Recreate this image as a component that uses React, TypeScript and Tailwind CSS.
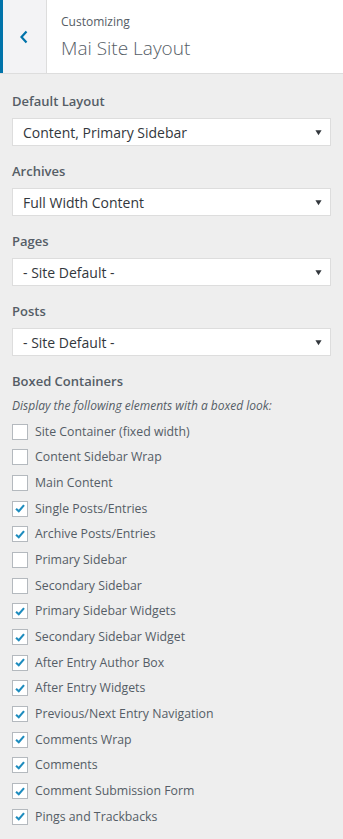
const selects = [
  { label: "Default Layout", value: "Content, Primary Sidebar" },
  { label: "Archives", value: "Full Width Content" },
  { label: "Pages", value: "- Site Default -" },
  { label: "Posts", value: "- Site Default -" },
];

const boxes: [string, boolean][] = [
  ["Site Container (fixed width)", false],
  ["Content Sidebar Wrap", false],
  ["Main Content", false],
  ["Single Posts/Entries", true],
  ["Archive Posts/Entries", true],
  ["Primary Sidebar", false],
  ["Secondary Sidebar", false],
  ["Primary Sidebar Widgets", true],
  ["Secondary Sidebar Widget", true],
  ["After Entry Author Box", true],
  ["After Entry Widgets", true],
  ["Previous/Next Entry Navigation", true],
  ["Comments Wrap", true],
  ["Comments", true],
  ["Comment Submission Form", true],
  ["Pings and Trackbacks", true],
];

const Check = ({ on }: { on: boolean }) => (
  <span className="flex h-4 w-4 shrink-0 items-center justify-center border border-[#b4b9be] bg-white">
    {on && (
      <svg viewBox="0 0 16 16" className="h-[15px] w-[15px]">
        <path d="M3.5 8.2 L6.6 11.2 L12.6 4.2" fill="none" stroke="#1e8cbe" strokeWidth="2.4" />
      </svg>
    )}
  </span>
);

export default function App() {
  return (
    <div className="min-h-[839px] w-[343px] bg-[#eeeeee] text-[#555d66]" style={{ fontFamily: '"Open Sans", "Liberation Sans", sans-serif' }}>
      {/* header */}
      <div className="flex h-[74px] border-b border-[#dddddd] bg-white">
        <div className="flex w-[47px] items-center justify-center border-l-[3px] border-r border-l-[#0073aa] border-r-[#dddddd] bg-[#f3f3f5] pr-[2px]">
          <svg viewBox="0 0 12 16" className="h-4 w-3">
            <path d="M8.5 2.5 L3.5 8 L8.5 13.5" fill="none" stroke="#0073aa" strokeWidth="2.2" />
          </svg>
        </div>
        <div className="flex flex-col pl-[14px] pt-[13px]">
          <span className="text-[12px] leading-[18px]">Customizing</span>
          <span className="mt-[4px] text-[19px] font-light leading-[26px]">Mai Site Layout</span>
        </div>
      </div>

      <div className="px-3 pt-[17px]">
        {selects.map((s) => (
          <div key={s.label} className="mb-[15px]">
            <div className="mb-[7px] text-[13px] font-semibold leading-[20px]">{s.label}</div>
            <div className="flex h-[28px] items-center justify-between border border-[#dddddd] bg-white pl-[10px] pr-[8px] text-[14px] text-[#32373c]">
              <span>{s.value}</span>
              <svg viewBox="0 0 8 8" className="h-[7px] w-[7px]">
                <path d="M0.5 1.5 H7.5 L4 7 Z" fill="#32373c" />
              </svg>
            </div>
          </div>
        ))}

        <div className="mb-[6px] text-[13px] font-semibold leading-[20px]">Boxed Containers</div>
        <div className="mb-[4px] text-[12px] italic leading-[18px]">Display the following elements with a boxed look:</div>
        <div className="flex flex-col">
          {boxes.map(([label, on]) => (
            <div key={label} className="flex h-[25.67px] items-center gap-[7px]">
              <Check on={on} />
              <span className="text-[12.3px] leading-[18px]">{label}</span>
            </div>
          ))}
        </div>
      </div>
    </div>
  );
}
